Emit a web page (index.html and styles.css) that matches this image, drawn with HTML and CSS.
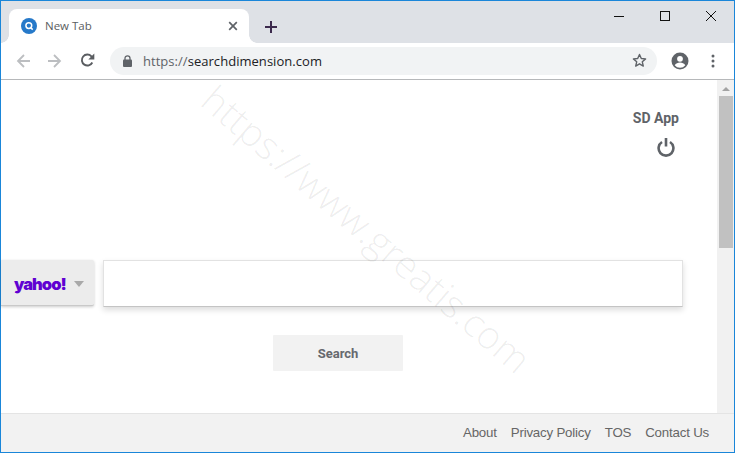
FILE: index.html
```html
<!DOCTYPE html>
<html lang="en">
<head>
<meta charset="utf-8">
<title>New Tab</title>
<link rel="stylesheet" href="styles.css">
</head>
<body>
<div class="window">
  <header class="titlebar">
    <div class="tab">
      <svg class="favicon" width="16" height="16" viewBox="0 0 16 16"><circle cx="8" cy="8" r="8" fill="#2679c9"/><circle cx="7.8" cy="7.6" r="2.9" fill="none" stroke="#fff" stroke-width="1.5"/><path d="M9.8 9.7l1.9 1.9" stroke="#fff" stroke-width="1.5"/></svg>
      <span class="tab-title">New Tab</span>
      <svg class="tab-close" width="10" height="10" viewBox="0 0 10 10"><path d="M1.2 1.2l7.6 7.6M8.8 1.2l-7.6 7.6" stroke="#5f6368" stroke-width="1.7"/></svg>
    </div>
    <svg class="new-tab" width="12" height="12" viewBox="0 0 12 12"><path d="M6 0v12M0 6h12" stroke="#3c2a4d" stroke-width="2"/></svg>
    <div class="win-controls">
      <svg class="win-btn" width="10" height="12" viewBox="0 0 10 12"><path d="M0 6.5h10" stroke="#111" stroke-width="1"/></svg>
      <svg class="win-btn" width="10" height="10" viewBox="0 0 10 10"><rect x=".5" y=".5" width="9" height="9" fill="none" stroke="#111"/></svg>
      <svg class="win-btn" width="10" height="10" viewBox="0 0 10 10"><path d="M0 0l10 10M10 0L0 10" stroke="#111" stroke-width="1"/></svg>
    </div>
  </header>
  <nav class="toolbar">
    <svg class="nav-icon back" width="14" height="14" viewBox="0 0 14 14"><path d="M14 7H2M8 1L2 7l6 6" fill="none" stroke="#bcbec1" stroke-width="1.8"/></svg>
    <svg class="nav-icon forward" width="14" height="14" viewBox="0 0 14 14"><path d="M0 7h12M6 1l6 6-6 6" fill="none" stroke="#bcbec1" stroke-width="1.8"/></svg>
    <svg class="nav-icon reload" width="15" height="15" viewBox="0 0 15 15"><path d="M12.300 9.500A5.500 5.500 0 1 1 11.400 3.300L13 5" fill="none" stroke="#5a5d61" stroke-width="1.900"/><path d="M14.300 .6v6h-6z" fill="#5a5d61"/></svg>
    <div class="omnibox">
      <svg class="lock" width="9" height="12" viewBox="0 0 9 12"><path d="M2 5V3.300a2.500 2.500 0 0 1 5 0V5" fill="none" stroke="#5f6368" stroke-width="1.300"/><rect y="4.500" width="9" height="7.500" rx="1" fill="#5f6368"/></svg>
      <span class="url"><span class="scheme">https://</span>searchdimension.com</span>
      <svg class="star" width="15" height="15" viewBox="0 0 15 15"><path d="M7.500 1.500l1.800 4 4.300.4-3.300 2.900 1 4.300-3.800-2.300-3.800 2.300 1-4.300L1.400 5.900l4.300-.4z" fill="none" stroke="#5f6368" stroke-width="1.400" stroke-linejoin="round"/></svg>
    </div>
    <svg class="avatar" width="18" height="18" viewBox="0 0 18 18"><circle cx="9" cy="9" r="8.500" fill="#5f6368"/><circle cx="9" cy="6.800" r="2.900" fill="#fff"/><path d="M3.700 13.200c1.100-1.900 3.200-2.700 5.300-2.700s4.200.8 5.300 2.700A6.800 6.800 0 0 1 9 15.800a6.800 6.800 0 0 1-5.300-2.600z" fill="#fff"/></svg>
    <svg class="menu" width="4" height="14" viewBox="0 0 4 14"><circle cx="2" cy="2" r="1.500" fill="#5f6368"/><circle cx="2" cy="7" r="1.500" fill="#5f6368"/><circle cx="2" cy="12" r="1.500" fill="#5f6368"/></svg>
  </nav>
  <div class="viewport">
    <main class="page">
      <div class="app-box">
        <span class="app-name">SD App</span>
        <svg class="power" width="18" height="19" viewBox="0 0 18 19"><path d="M5 4a7.400 7.400 0 1 0 8 0" fill="none" stroke="#5f6368" stroke-width="2.600"/><path d="M9 0v8.500" stroke="#5f6368" stroke-width="2.600"/></svg>
      </div>
      <div class="search-row">
        <div class="engine">
          <span class="yahoo">yahoo!</span>
          <span class="caret"></span>
        </div>
        <div class="search-input"></div>
      </div>
      <div class="search-btn-wrap"><button class="search-btn" type="button">Search</button></div>
      <div class="watermark">https://www.greatis.com</div>
    </main>
    <aside class="scrollbar">
      <span class="arrow"></span>
      <span class="thumb"></span>
    </aside>
  </div>
  <footer class="footer">
    <a>About</a><a>Privacy Policy</a><a>TOS</a><a>Contact Us</a>
  </footer>
</div>
</body>
</html>
```
FILE: styles.css
```css
* { box-sizing: border-box; }
html, body { margin: 0; padding: 0; }
body { width: 735px; height: 453px; overflow: hidden; background: #fff; font-family: "Liberation Sans", Arial, sans-serif; }
.window { width: 735px; height: 453px; border: 1px solid #1a86d9; display: flex; flex-direction: column; }
.titlebar { height: 42px; flex: none; background: #dee1e6; display: flex; align-items: flex-start; padding: 8px 0 0 8px; }
.tab { position: relative; width: 240px; height: 34px; background: #fff; border-radius: 8px 8px 0 0; display: flex; align-items: center; padding: 0 0 0 12px; }
.tab::before, .tab::after { content: ""; position: absolute; bottom: 0; width: 8px; height: 8px; }
.tab::before { left: -8px; background: radial-gradient(circle at 0 0, #dee1e6 7.500px, #fff 8px); }
.tab::after { right: -8px; background: radial-gradient(circle at 100% 0, #dee1e6 7.500px, #fff 8px); }
.favicon { flex: none; }
.tab-title { margin-left: 8px; font: 11.500px/16px "Open Sans", sans-serif; color: #5a5d61; }
.tab-close { margin-left: auto; margin-right: 11px; }
.new-tab { margin: 12px 0 0 16px; }
.win-controls { margin-left: auto; display: flex; align-items: center; gap: 36px; padding: 1px 18px 0 0; height: 14px; margin-top: -1px; }
.win-btn { display: block; }
.toolbar { height: 37px; flex: none; background: #fff; border-bottom: 1px solid #b6b8ba; display: flex; align-items: center; padding: 0 0 1px 15px; }
.nav-icon { flex: none; }
.forward { margin-left: 18px; }
.reload { margin-left: 18px; }
.omnibox { width: 547px; height: 28px; margin-left: 15px; background: #f1f3f4; border-radius: 14px; display: flex; align-items: center; padding: 0 10px 0 13px; }
.lock { flex: none; }
.url { margin-left: 11px; font: 13px/18px "Open Sans", sans-serif; letter-spacing: .04px; color: #202124; }
.scheme { color: #5f6368; }
.star { margin-left: auto; }
.avatar { margin-left: 14px; flex: none; }
.menu { margin-left: 22px; flex: none; }
.viewport { flex: 1; min-height: 0; display: flex; }
.page { position: relative; flex: 1; min-width: 0; background: #fff; }
.app-box { display: flex; flex-direction: column; align-items: flex-end; padding: 30px 38px 0 0; height: 180px; }
.app-name { font: 700 14px/17px Roboto, sans-serif; color: #5f6368; }
.power { margin: 11px 4px 0 0; }
.search-row { display: flex; align-items: flex-start; height: 47px; }
.engine { width: 93px; height: 46px; background: #ececec; border-bottom: 1px solid #c9c9c9; box-shadow: 0 1px 3px rgba(0,0,0,.2); border-radius: 0 2px 2px 0; display: flex; align-items: center; padding: 2px 0 0 13px; }
.yahoo { font: 900 16.500px/20px Inter, sans-serif; letter-spacing: -1px; color: #6001d2; }
.caret { margin: 0 0 0 8px; border: 5px solid transparent; border-top: 6px solid #a9a9a9; border-bottom: 0; }
.search-input { width: 580px; height: 47px; margin-left: 9px; background: #fff; border: 1px solid #e2e2e2; border-bottom-color: #c4c4c4; box-shadow: 0 3px 6px rgba(0,0,0,.14); }
.search-btn-wrap { display: flex; justify-content: flex-start; padding: 28px 0 0 272px; }
.search-btn { width: 130px; height: 36px; border: 0; border-radius: 1px; background: #f2f2f2; font: 700 13px/16px Roboto, sans-serif; color: #66696e; padding: 2px 0 0 0; }
.watermark { position: absolute; left: 221px; top: -3px; font: 300 38.500px/42px "Open Sans", sans-serif; white-space: nowrap; color: rgba(0,0,0,.07); transform: rotate(40.500deg); transform-origin: 0 0; pointer-events: none; }
.scrollbar { width: 17px; flex: none; background: #f1f1f1; display: flex; flex-direction: column; align-items: center; }
.arrow { margin-top: 7px; border: 4px solid transparent; border-bottom: 4px solid #a3a3a3; border-top: 0; }
.thumb { width: 14px; height: 152px; margin-top: 5px; background: #c1c1c1; }
.footer { height: 39px; flex: none; background: #f2f2f2; border-top: 1px solid #e4e4e4; display: flex; justify-content: flex-end; align-items: center; gap: 14px; padding: 0 25px 1px 0; font-size: 13.300px; letter-spacing: -.2px; line-height: 16px; color: #666; }
```
